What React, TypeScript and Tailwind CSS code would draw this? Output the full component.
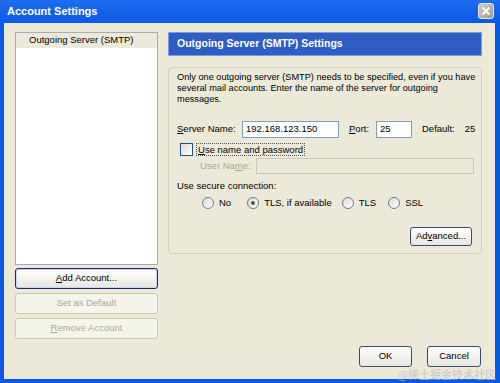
import React from "react";

const font = "font-['Liberation_Sans',Arial,sans-serif]";

function XpButton({
  label,
  u,
  rest,
  pre = "",
  disabled,
  focused,
  className = "",
}: any) {
  return (
    <div
      className={`flex items-center justify-center rounded-[3px] border text-[9.5px] ${
        disabled
          ? "border-[#C9C7BA] bg-[#F5F4EA] text-[#ACA899]"
          : focused
          ? "border-[#1B2A5A] bg-gradient-to-b from-white to-[#E7E6DF] text-black shadow-[inset_0_0_0_1px_#C6D3F7]"
          : "border-[#3D4A70] bg-gradient-to-b from-white to-[#E7E6DF] text-black"
      } ${className}`}
    >
      <span>
        {pre}
        <span className="underline">{u}</span>
        {rest}
      </span>
    </div>
  );
}

function Radio({ checked, label }: any) {
  return (
    <div className="flex items-center gap-[5px]">
      <div className="flex h-[12px] w-[12px] items-center justify-center rounded-full border border-[#6B7A8E] bg-gradient-to-br from-[#DCDBD3] to-white">
        {checked && <div className="h-[4px] w-[4px] rounded-full bg-[#4A5A3A]" />}
      </div>
      <span>{label}</span>
    </div>
  );
}

export default function App() {
  return (
    <div className={`relative flex h-[383px] w-[500px] flex-col bg-[#0A58E6] ${font} text-black`}>
      {/* title bar */}
      <div className="flex h-[23px] items-center justify-between bg-gradient-to-b from-[#1E6CEF] to-[#0A58E6] pl-[7px] pr-[6px]">
        <span className="text-[11px] font-bold text-white">Account Settings</span>
        <div className="mt-[-2px] flex h-[16px] w-[16px] items-center justify-center rounded-[3px] border border-[#E8E8E8] bg-gradient-to-br from-[#CFCEC8] to-[#9C9B95]">
          <svg width="10" height="10" viewBox="0 0 10 10">
            <path d="M1.5 1.5 L8.5 8.5 M8.5 1.5 L1.5 8.5" stroke="white" strokeWidth="1.8" />
          </svg>
        </div>
      </div>

      {/* body */}
      <div className="mb-[4px] ml-[4px] mr-[5px] flex flex-1 gap-[10px] bg-[#ECE9D8] pl-[11px] pr-[11px] pt-[9px] pb-[12px] text-[9.5px]">
        {/* left column */}
        <div className="flex w-[143px] flex-col">
          <div className="h-[233px] border border-[#A5ACB5] bg-white">
            <div className="flex h-[15px] items-center bg-[#ECE9D8] pl-[13px]">Outgoing Server (SMTP)</div>
          </div>
          <XpButton className="mt-[3px] h-[21px]" u="A" rest="dd Account..." focused />
          <XpButton className="mt-[4px] h-[21px]" u="" pre="Set as Default" disabled />
          <XpButton className="mt-[4px] h-[21px]" u="R" rest="emove Account" disabled />
        </div>

        {/* right column */}
        <div className="flex w-[314px] flex-col">
          <div className="flex h-[24px] items-center border border-[#7E9BD8] bg-[#2E5DC4] pl-[8px] text-[10.5px] font-bold text-white">
            Outgoing Server (SMTP) Settings
          </div>

          <div className="mt-[11px] flex h-[187px] flex-col rounded-[4px] border border-[#D0D0BF] pl-[8px] pr-[5px] pt-[4px]">
            <p className="text-[9.2px] leading-[11px]">
              Only one outgoing server (SMTP) needs to be specified, even if you have several mail accounts. Enter the name of the server for outgoing messages.
            </p>

            <div className="mt-[16px] flex h-[17px] items-center">
              <span className="w-[65px]">
                <span className="underline">S</span>erver Name:
              </span>
              <div className="flex h-[17px] w-[97px] items-center border border-[#7F9DB9] bg-white pl-[3px]">192.168.123.150</div>
              <span className="ml-[10px] w-[27px]">
                <span className="underline">P</span>ort:
              </span>
              <div className="flex h-[17px] w-[36px] items-center border border-[#7F9DB9] bg-white pl-[3px]">25</div>
              <span className="ml-[10px]">Default:</span>
              <span className="ml-[10px]">25</span>
            </div>

            <div className="mt-[5px] flex items-center pl-[3px]">
              <div className="h-[13px] w-[13px] border border-[#1C5180] bg-gradient-to-br from-[#DCDBD3] to-white" />
              <span className="ml-[3px] border border-dotted border-[#555] px-[1px] leading-[11px]">
                <span className="underline">U</span>se name and password
              </span>
            </div>

            <div className="mt-[2px] flex h-[16px] items-center pl-[23px] text-[#ACA899]">
              <span className="w-[56px]">
                User Na<span className="underline">m</span>e:
              </span>
              <div className="h-[16px] w-[218px] border border-[#C9C7BA] bg-[#ECE9D8]" />
            </div>

            <div className="mt-[5px]">Use secure connection:</div>

            <div className="mt-[3px] flex items-center pl-[25px]">
              <Radio label="No" />
              <div className="ml-[16px]">
                <Radio checked label="TLS, if available" />
              </div>
              <div className="ml-[10px]">
                <Radio label="TLS" />
              </div>
              <div className="ml-[12px]">
                <Radio label="SSL" />
              </div>
            </div>

            <div className="mt-[16px] flex justify-end pr-[4px]">
              <XpButton className="h-[19px] w-[62px]" pre="Ad" u="v" rest="anced..." />
            </div>
          </div>

          <div className="mt-auto flex justify-end gap-[15px] pr-[1px]">
            <XpButton className="h-[21px] w-[53px]" pre="OK" u="" />
            <XpButton className="h-[21px] w-[54px]" pre="Cancel" u="" />
          </div>
        </div>
      </div>

      <div className="absolute bottom-[2px] right-[4px] font-['Noto_Sans_CJK_SC',sans-serif] text-[11px] leading-[13px] text-[#BDBDBD]/80">
        @稀土掘金技术社区
      </div>
    </div>
  );
}
